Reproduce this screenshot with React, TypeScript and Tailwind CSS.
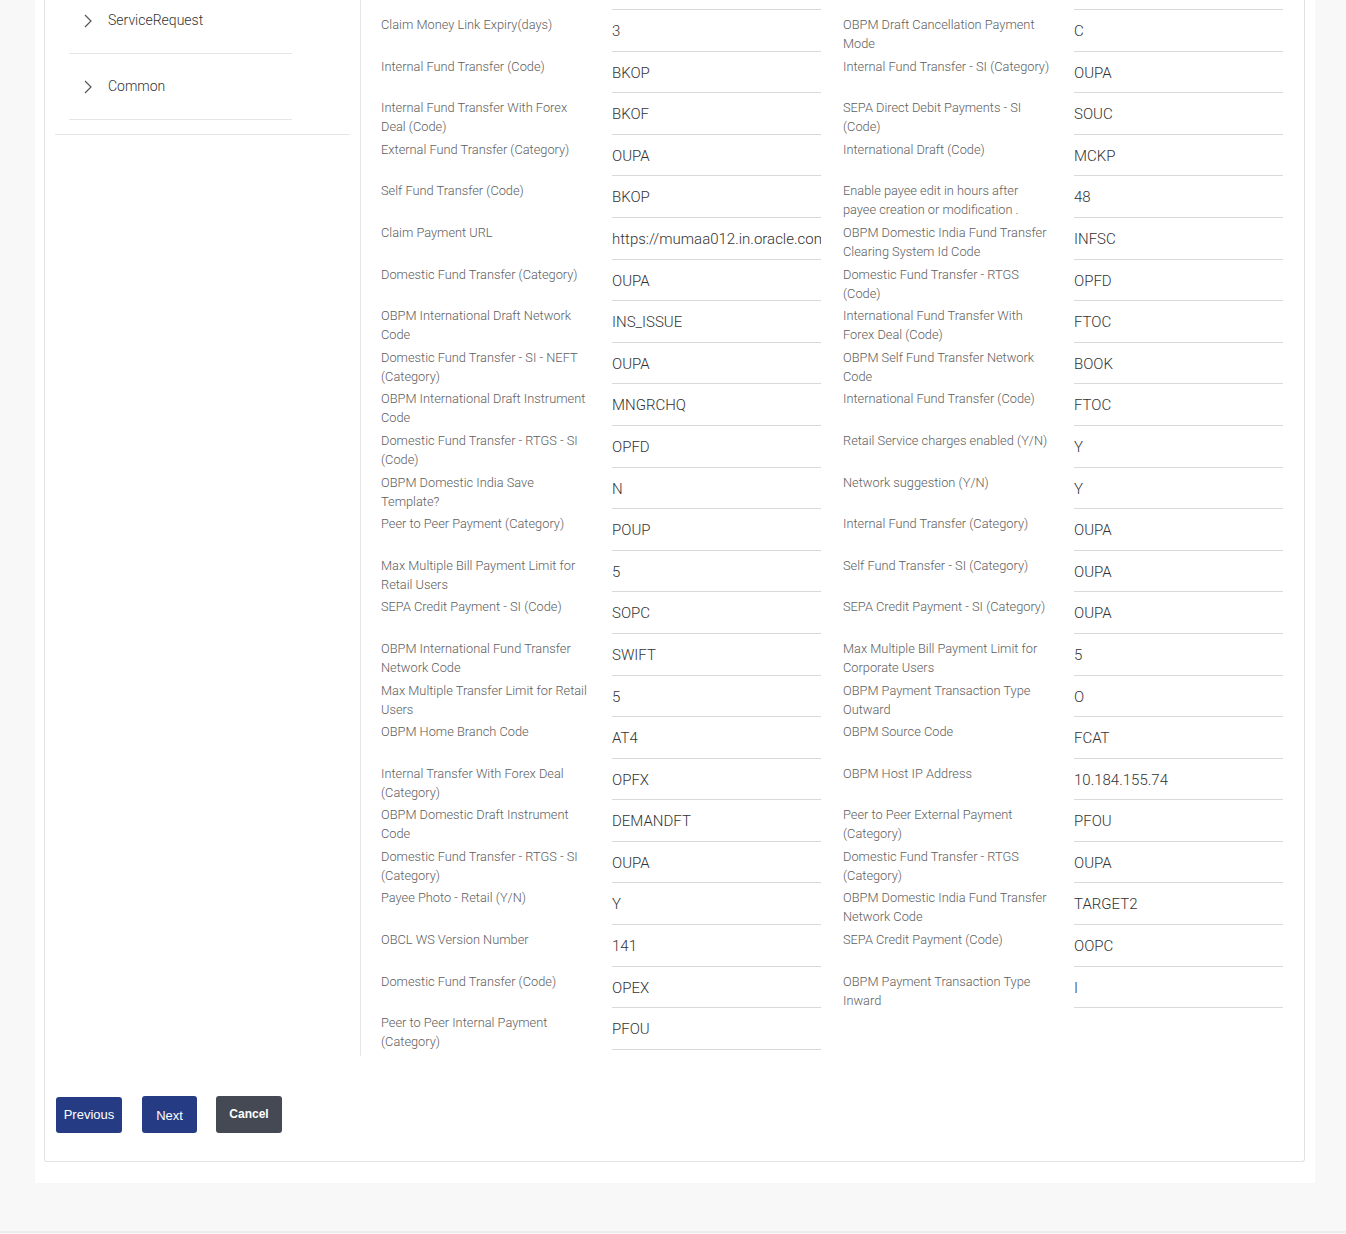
import React from "react";

const left: [string, string][] = [
  ["Claim Money Link Expiry(days)", "3"],
  ["Internal Fund Transfer (Code)", "BKOP"],
  ["Internal Fund Transfer With Forex Deal (Code)", "BKOF"],
  ["External Fund Transfer (Category)", "OUPA"],
  ["Self Fund Transfer (Code)", "BKOP"],
  ["Claim Payment URL", "https://mumaa012.in.oracle.com:18443/digx/v1/payments/claim"],
  ["Domestic Fund Transfer (Category)", "OUPA"],
  ["OBPM International Draft Network Code", "INS_ISSUE"],
  ["Domestic Fund Transfer - SI - NEFT (Category)", "OUPA"],
  ["OBPM International Draft Instrument Code", "MNGRCHQ"],
  ["Domestic Fund Transfer - RTGS - SI (Code)", "OPFD"],
  ["OBPM Domestic India Save Template?", "N"],
  ["Peer to Peer Payment (Category)", "POUP"],
  ["Max Multiple Bill Payment Limit for Retail Users", "5"],
  ["SEPA Credit Payment - SI (Code)", "SOPC"],
  ["OBPM International Fund Transfer Network Code", "SWIFT"],
  ["Max Multiple Transfer Limit for Retail Users", "5"],
  ["OBPM Home Branch Code", "AT4"],
  ["Internal Transfer With Forex Deal (Category)", "OPFX"],
  ["OBPM Domestic Draft Instrument Code", "DEMANDFT"],
  ["Domestic Fund Transfer - RTGS - SI (Category)", "OUPA"],
  ["Payee Photo - Retail (Y/N)", "Y"],
  ["OBCL WS Version Number", "141"],
  ["Domestic Fund Transfer (Code)", "OPEX"],
  ["Peer to Peer Internal Payment (Category)", "PFOU"],
];

const right: [string, string][] = [
  ["OBPM Draft Cancellation Payment Mode", "C"],
  ["Internal Fund Transfer - SI (Category)", "OUPA"],
  ["SEPA Direct Debit Payments - SI (Code)", "SOUC"],
  ["International Draft (Code)", "MCKP"],
  ["Enable payee edit in hours after payee creation or modification .", "48"],
  ["OBPM Domestic India Fund Transfer Clearing System Id Code", "INFSC"],
  ["Domestic Fund Transfer - RTGS (Code)", "OPFD"],
  ["International Fund Transfer With Forex Deal (Code)", "FTOC"],
  ["OBPM Self Fund Transfer Network Code", "BOOK"],
  ["International Fund Transfer (Code)", "FTOC"],
  ["Retail Service charges enabled (Y/N)", "Y"],
  ["Network suggestion (Y/N)", "Y"],
  ["Internal Fund Transfer (Category)", "OUPA"],
  ["Self Fund Transfer - SI (Category)", "OUPA"],
  ["SEPA Credit Payment - SI (Category)", "OUPA"],
  ["Max Multiple Bill Payment Limit for Corporate Users", "5"],
  ["OBPM Payment Transaction Type Outward", "O"],
  ["OBPM Source Code", "FCAT"],
  ["OBPM Host IP Address", "10.184.155.74"],
  ["Peer to Peer External Payment (Category)", "PFOU"],
  ["Domestic Fund Transfer - RTGS (Category)", "OUPA"],
  ["OBPM Domestic India Fund Transfer Network Code", "TARGET2"],
  ["SEPA Credit Payment (Code)", "OOPC"],
  ["OBPM Payment Transaction Type Inward", "I"],
];

function Chevron() {
  return (
    <svg width="10" height="14" viewBox="0 0 10 14" className="shrink-0">
      <polyline points="2,1 8,7 2,13" fill="none" stroke="#555" strokeWidth="1.2" strokeLinejoin="miter" />
    </svg>
  );
}

function Field({ label, value }: { label: string; value: string }) {
  return (
    <div className="flex h-[41.6px] w-[462px]">
      <div className="w-[231px] shrink-0 pr-[22px] pt-[5px] text-[12.8px] leading-[19px] font-light text-[#5e5e5e]">
        {label}
      </div>
      <div className="w-[209px] shrink-0 border-b border-[#d9d9d9] overflow-hidden whitespace-nowrap pt-[11px] text-[15px] leading-[20px] font-light text-[#333]">
        {value}
      </div>
    </div>
  );
}

function Column({ rows }: { rows: [string, string][] }) {
  return (
    <div className="flex w-[462px] flex-col">
      <div className="h-[10px] w-[440px] flex">
        <div className="w-[231px]" />
        <div className="w-[209px] border-b border-[#d9d9d9]" />
      </div>
      {rows.map(([l, v], i) => (
        <Field key={i} label={l} value={v} />
      ))}
    </div>
  );
}

export default function App() {
  return (
    <div className="min-h-[1234px] bg-[#f8f8f8] font-['Roboto',sans-serif]">
      <div className="ml-[35px] w-[1280px] bg-white pl-[9px] pr-[10px] pb-[21px]">
        <div className="w-[1261px] rounded-b-[3px] border border-t-0 border-[#e2e2e2]">
          <div className="flex">
            <aside className="w-[316px] shrink-0 border-r border-[#e6e6e6]">
              <div className="mx-[10px] border-b border-[#e6e6e6] pb-[14px]">
                <div className="-mt-[12px] ml-[14px] w-[223px]">
                  {["ServiceRequest", "Common"].map((t) => (
                    <div key={t} className="flex h-[66px] items-center border-b border-[#e6e6e6] pl-[14px]">
                      <Chevron />
                      <span className="ml-[15px] text-[14px] font-light text-[#333]">{t}</span>
                    </div>
                  ))}
                </div>
              </div>
            </aside>
            <main className="flex pl-[20px] pb-[6px]">
              <Column rows={left} />
              <Column rows={right} />
            </main>
          </div>
          <div className="flex items-start gap-0 pl-[11px] pt-[40px] pb-[28px] font-['Liberation_Sans',Arial,sans-serif]">
            <button className="mt-[1px] h-[36px] w-[66px] rounded-[3px] bg-[#253c85] text-[13px] text-white">
              Previous
            </button>
            <button className="ml-[20px] h-[37px] w-[55px] rounded-[3px] bg-[#253c85] pt-[2px] text-[13px] text-white">
              Next
            </button>
            <button className="ml-[19px] h-[37px] w-[66px] rounded-[3px] bg-[#444953] text-[12px] font-bold text-white">
              Cancel
            </button>
          </div>
        </div>
      </div>
      <div className="h-[48px]" />
      <div className="h-[2px] bg-[#ececec]" />
    </div>
  );
}
